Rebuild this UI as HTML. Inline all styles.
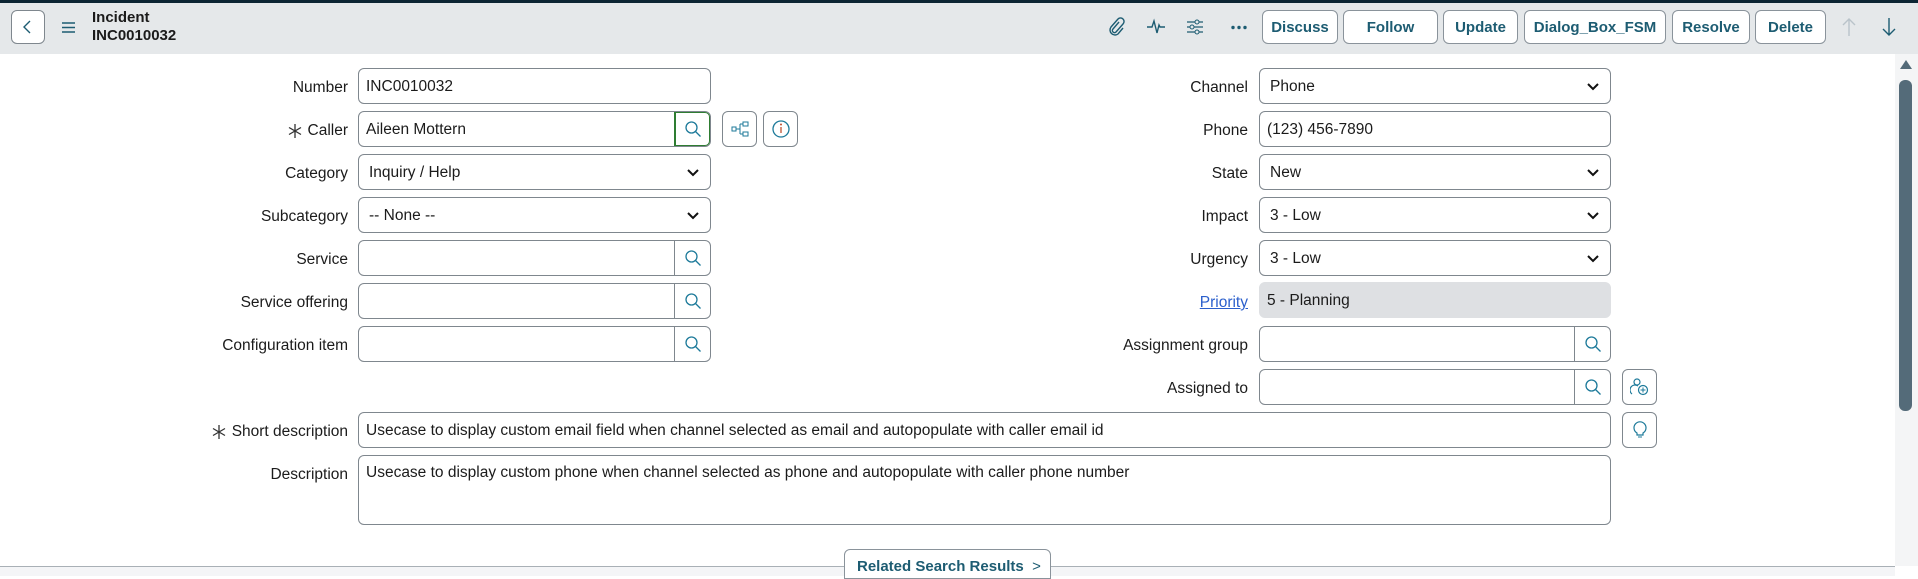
<!DOCTYPE html>
<html><head><style>
*{box-sizing:border-box;margin:0;padding:0}
body{width:1918px;height:576px;overflow:hidden;background:#fff;font-family:"Liberation Sans",sans-serif;font-size:15.5px;color:#1b1b1b;position:relative}
.a{position:absolute}
.hdr{left:0;top:0;width:1918px;height:54px;background:#e5e8ea;border-top:3px solid #0c2533}
.btn{position:absolute;top:10px;height:34px;border:1px solid #8a939b;border-radius:6px;background:#fff;color:#1d5c72;font-weight:bold;font-size:15px;display:flex;align-items:center;justify-content:center}
.lbl{position:absolute;right:calc(1918px - 348px);text-align:right;white-space:nowrap;display:flex;align-items:center;gap:6px;margin-top:2px}
.inp{position:absolute;height:36px;border:1px solid #7f878e;border-radius:6px;background:#fff;padding-left:7px;padding-top:2px;display:flex;align-items:center;white-space:nowrap;overflow:hidden}
.srch{position:absolute;right:0;top:0;width:36px;height:34px;border-left:1px solid #7f878e;display:flex;align-items:center;justify-content:center}
.chev{position:absolute;right:10px;top:10px}
.ib{position:absolute;width:35px;height:36px;border:1px solid #7f878e;border-radius:6px;display:flex;align-items:center;justify-content:center}
</style></head><body>
<div class="a hdr"></div>
<div class="ib" style="left:11px;top:10px;width:34px;height:34px;background:#fff"><svg width="14" height="16"><path d="M9 2L3 8l6 6" fill="none" stroke="#1d5c72" stroke-width="1.4"/></svg></div>
<svg class="a" style="left:62px;top:22px" width="13" height="11"><path d="M0 1h13M0 5.5h13M0 10h13" stroke="#1d5c72" stroke-width="1.4"/></svg>
<div class="a" style="left:92px;top:9px;font-weight:bold;font-size:15px;line-height:18px">Incident<br>INC0010032</div>
<svg class="a" style="left:1107px;top:17px" width="18" height="20"><path d="M12 5l-6 7a2 2 0 0 0 3 3l7-8a3.5 3.5 0 0 0-5-5L4 10a5 5 0 0 0 7 7l5-6" fill="none" stroke="#1d5c72" stroke-width="1.4"/></svg>
<svg class="a" style="left:1147px;top:18px" width="18" height="18"><path d="M0 9h5l2-6 3 12 2-8 1 2h5" fill="none" stroke="#1d5c72" stroke-width="1.4"/></svg>
<svg class="a" style="left:1186px;top:18px" width="18" height="18"><path d="M1 4h16M1 9h16M1 14h16" stroke="#1d5c72" stroke-width="1.3"/><circle cx="11" cy="4" r="2" fill="#e5e8ea" stroke="#1d5c72"/><circle cx="6" cy="9" r="2" fill="#e5e8ea" stroke="#1d5c72"/><circle cx="11" cy="14" r="2" fill="#e5e8ea" stroke="#1d5c72"/></svg>
<svg class="a" style="left:1231px;top:25px" width="16" height="5"><circle cx="2" cy="2.5" r="1.7" fill="#1d5c72"/><circle cx="8" cy="2.5" r="1.7" fill="#1d5c72"/><circle cx="14" cy="2.5" r="1.7" fill="#1d5c72"/></svg>
<div class="btn" style="left:1262px;width:76px">Discuss</div>
<div class="btn" style="left:1343px;width:95px">Follow</div>
<div class="btn" style="left:1443px;width:75px">Update</div>
<div class="btn" style="left:1524px;width:142px">Dialog_Box_FSM</div>
<div class="btn" style="left:1672px;width:78px">Resolve</div>
<div class="btn" style="left:1755px;width:71px">Delete</div>
<svg class="a" style="left:1842px;top:17px" width="14" height="20"><path d="M7 19V2M1 8l6-6 6 6" fill="none" stroke="#b9c3ca" stroke-width="1.4"/></svg>
<svg class="a" style="left:1882px;top:17px" width="14" height="20"><path d="M7 1v17M1 12l6 6 6-6" fill="none" stroke="#1d5c72" stroke-width="1.4"/></svg>

<div class="a" style="left:1895px;top:54px;width:23px;height:512px;background:#f4f5f6"></div>
<svg class="a" style="left:1899px;top:58px" width="14" height="12"><path d="M7 2l6 9H1z" fill="#536a78"/></svg>
<div class="a" style="left:1899px;top:80px;width:13px;height:331px;background:#546b79;border-radius:6px"></div>

<div class="lbl" style="top:77px;height:18px">Number</div>
<div class="inp" style="left:358px;top:68px;width:353px">INC0010032</div>
<div class="lbl" style="top:120px;height:18px"><svg width="14" height="14"><path d="M7 0v14M1 3.5l12 7M1 10.5l12-7" stroke="#333" stroke-width="1.3"/></svg>Caller</div>
<div class="inp" style="left:358px;top:111px;width:353px">Aileen Mottern<div class="srch" style="border:2px solid #2e7d32;height:36px;top:-1px;right:-1px;width:37px;border-radius:0 6px 6px 0"><svg width="18" height="18"><circle cx="7.5" cy="7.5" r="5.5" fill="none" stroke="#1d7a9a" stroke-width="1.3"/><path d="M11.5 11.5l5 5" stroke="#1d7a9a" stroke-width="1.3"/></svg></div></div>
<div class="ib" style="left:722px;top:111px"><svg width="18" height="16"><rect x="1" y="6" width="4" height="4" fill="none" stroke="#1d7a9a"/><rect x="12" y="1" width="5" height="4" fill="none" stroke="#1d7a9a"/><rect x="12" y="11" width="5" height="4" fill="none" stroke="#1d7a9a"/><path d="M5 8h4M9 3v10M9 3h3M9 13h3" stroke="#1d7a9a" fill="none"/></svg></div>
<div class="ib" style="left:763px;top:111px"><svg width="20" height="20"><circle cx="10" cy="10" r="8" fill="none" stroke="#1d7a9a" stroke-width="1.3"/><path d="M10 8v6" stroke="#c05030" stroke-width="1.3"/><circle cx="10" cy="5.5" r="1" fill="#c05030"/></svg></div>

<div class="lbl" style="top:163px;height:18px">Category</div>
<div class="inp" style="left:358px;top:154px;width:353px;padding-left:10px">Inquiry / Help<svg class="chev" width="14" height="14"><path d="M2 5l5 5 5-5" fill="none" stroke="#111" stroke-width="2"/></svg></div>
<div class="lbl" style="top:206px;height:18px">Subcategory</div>
<div class="inp" style="left:358px;top:197px;width:353px;padding-left:10px">-- None --<svg class="chev" width="14" height="14"><path d="M2 5l5 5 5-5" fill="none" stroke="#111" stroke-width="2"/></svg></div>
<div class="lbl" style="top:249px;height:18px">Service</div>
<div class="inp" style="left:358px;top:240px;width:353px"><div class="srch"><svg width="18" height="18"><circle cx="7.5" cy="7.5" r="5.5" fill="none" stroke="#1d7a9a" stroke-width="1.3"/><path d="M11.5 11.5l5 5" stroke="#1d7a9a" stroke-width="1.3"/></svg></div></div>
<div class="lbl" style="top:292px;height:18px">Service offering</div>
<div class="inp" style="left:358px;top:283px;width:353px"><div class="srch"><svg width="18" height="18"><circle cx="7.5" cy="7.5" r="5.5" fill="none" stroke="#1d7a9a" stroke-width="1.3"/><path d="M11.5 11.5l5 5" stroke="#1d7a9a" stroke-width="1.3"/></svg></div></div>
<div class="lbl" style="top:335px;height:18px">Configuration item</div>
<div class="inp" style="left:358px;top:326px;width:353px"><div class="srch"><svg width="18" height="18"><circle cx="7.5" cy="7.5" r="5.5" fill="none" stroke="#1d7a9a" stroke-width="1.3"/><path d="M11.5 11.5l5 5" stroke="#1d7a9a" stroke-width="1.3"/></svg></div></div>

<div class="lbl" style="right:670px;top:77px;height:18px">Channel</div>
<div class="inp" style="left:1259px;top:68px;width:352px;padding-left:10px">Phone<svg class="chev" width="14" height="14"><path d="M2 5l5 5 5-5" fill="none" stroke="#111" stroke-width="2"/></svg></div>
<div class="lbl" style="right:670px;top:120px;height:18px">Phone</div>
<div class="inp" style="left:1259px;top:111px;width:352px">(123) 456-7890</div>
<div class="lbl" style="right:670px;top:163px;height:18px">State</div>
<div class="inp" style="left:1259px;top:154px;width:352px;padding-left:10px">New<svg class="chev" width="14" height="14"><path d="M2 5l5 5 5-5" fill="none" stroke="#111" stroke-width="2"/></svg></div>
<div class="lbl" style="right:670px;top:206px;height:18px">Impact</div>
<div class="inp" style="left:1259px;top:197px;width:352px;padding-left:10px">3 - Low<svg class="chev" width="14" height="14"><path d="M2 5l5 5 5-5" fill="none" stroke="#111" stroke-width="2"/></svg></div>
<div class="lbl" style="right:670px;top:249px;height:18px">Urgency</div>
<div class="inp" style="left:1259px;top:240px;width:352px;padding-left:10px">3 - Low<svg class="chev" width="14" height="14"><path d="M2 5l5 5 5-5" fill="none" stroke="#111" stroke-width="2"/></svg></div>
<div class="lbl" style="right:670px;top:292px;height:18px;color:#2b5fcc;text-decoration:underline">Priority</div>
<div class="inp" style="left:1259px;top:282px;width:352px;background:#dee0e3;border-color:#dee0e3">5 - Planning</div>
<div class="lbl" style="right:670px;top:335px;height:18px">Assignment group</div>
<div class="inp" style="left:1259px;top:326px;width:352px"><div class="srch"><svg width="18" height="18"><circle cx="7.5" cy="7.5" r="5.5" fill="none" stroke="#1d7a9a" stroke-width="1.3"/><path d="M11.5 11.5l5 5" stroke="#1d7a9a" stroke-width="1.3"/></svg></div></div>
<div class="lbl" style="right:670px;top:378px;height:18px">Assigned to</div>
<div class="inp" style="left:1259px;top:369px;width:352px"><div class="srch"><svg width="18" height="18"><circle cx="7.5" cy="7.5" r="5.5" fill="none" stroke="#1d7a9a" stroke-width="1.3"/><path d="M11.5 11.5l5 5" stroke="#1d7a9a" stroke-width="1.3"/></svg></div></div>
<div class="ib" style="left:1622px;top:369px"><svg width="20" height="20"><circle cx="7" cy="5" r="3" fill="none" stroke="#1d7a9a" stroke-width="1.2"/><path d="M2 17a5 5 0 0 1 6-8" fill="none" stroke="#1d7a9a" stroke-width="1.2"/><circle cx="13" cy="13" r="4.5" fill="none" stroke="#1d7a9a" stroke-width="1.2"/><path d="M13 10.5v5M10.5 13h5" stroke="#1d7a9a"/></svg></div>

<div class="lbl" style="top:421px;height:18px"><svg width="14" height="14"><path d="M7 0v14M1 3.5l12 7M1 10.5l12-7" stroke="#333" stroke-width="1.3"/></svg>Short description</div>
<div class="inp" style="left:358px;top:412px;width:1253px">Usecase to display custom email field when channel selected as email and autopopulate with caller email id</div>
<div class="ib" style="left:1622px;top:412px"><svg width="16" height="20"><path d="M5 13a6 6 0 1 1 6 0v2H5z" fill="none" stroke="#1d7a9a" stroke-width="1.2"/><path d="M6 17h4" stroke="#1d7a9a"/></svg></div>

<div class="lbl" style="top:464px;height:18px">Description</div>
<div class="inp" style="left:358px;top:455px;width:1253px;height:70px;align-items:flex-start;padding-top:8px">Usecase to display custom phone when channel selected as phone and autopopulate with caller phone number</div>

<div class="a" style="left:0;top:566px;width:1895px;height:10px;background:#f4f5f7;border-top:1px solid #a9b0b6"></div>
<div class="a" style="left:844px;top:549px;width:207px;height:30px;background:#fff;border:1px solid #8a939b;border-radius:6px 6px 0 0;color:#1d5c72;font-weight:bold;font-size:15px;padding:8px 0 0 12px">Related Search Results&nbsp;&nbsp;<span style="font-weight:normal">&gt;</span></div>
</body></html>
